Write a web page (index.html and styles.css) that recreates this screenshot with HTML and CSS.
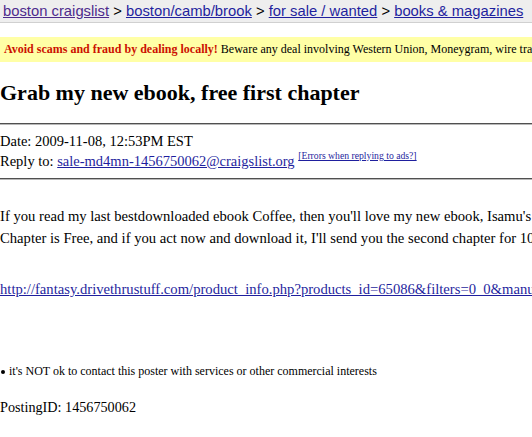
FILE: index.html
```html
<!DOCTYPE html>
<html>
<head>
<meta charset="utf-8">
<link rel="stylesheet" href="styles.css">
</head>
<body>
<div class="bchead">
  <a class="visited" href="#">boston craigslist</a> &gt; <a href="#">boston/camb/brook</a> &gt; <a href="#">for sale / wanted</a> &gt; <a href="#">books &amp; magazines</a>
</div>
<div class="warn"><span class="warn-strong">Avoid scams and fraud by dealing locally!</span> Beware any deal involving Western Union, Moneygram, wire transfer, cashier check, money order, shipping, escrow</div>
<h2 class="title">Grab my new ebook, free first chapter</h2>
<hr class="rule rule-top">
<div class="meta">
  <div>Date: 2009-11-08, 12:53PM EST</div>
  <div>Reply to: <a href="#">sale-md4mn-1456750062@craigslist.org</a> <sup class="err"><a href="#">[Errors when replying to ads?]</a></sup></div>
</div>
<hr class="rule">
<div class="body">
  <p class="text">If you read my last bestdownloaded ebook Coffee, then you'll love my new ebook, Isamu's Journey. The First Chapter is Free, and if you act now and download it, I'll send you the second chapter for 10 cents.</p>
  <p class="link"><a href="#">http://fantasy.drivethrustuff.com/product_info.php?products_id=65086&amp;filters=0_0&amp;manufacturers_id=0</a></p>
</div>
<ul class="notes">
  <li>it's NOT ok to contact this poster with services or other commercial interests</li>
</ul>
<div class="posting">PostingID: 1456750062</div>
</body>
</html>
```

FILE: styles.css
```css
html, body {
  margin: 0;
  padding: 0;
  background: #fff;
  overflow: hidden;
}
body {
  font-family: "Liberation Serif", "Times New Roman", serif;
  font-size: 14.5px;
  color: #000;
  width: 532px;
}
a {
  color: #1f1f9e;
}
a.visited {
  color: #4d2b8c;
}
.bchead {
  font-family: "Liberation Sans", Arial, sans-serif;
  font-size: 14.8px;
  background: #eeeeee;
  border-bottom: 1px solid #d0d0d0;
  padding: 1px 3px 0 3px;
  height: 21px;
  line-height: 21px;
  white-space: nowrap;
  overflow: hidden;
}
.warn {
  margin-top: 14px;
  background: #ffffa6;
  font-size: 12px;
  line-height: 25px;
  height: 25px;
  padding: 0 4px;
  white-space: nowrap;
  overflow: hidden;
}
.warn-strong {
  color: #cc1100;
  font-weight: bold;
}
.title {
  font-size: 22px;
  font-weight: bold;
  margin: 18px 0 0 0;
  line-height: 26px;
  white-space: nowrap;
}
.rule {
  margin: 0;
  border: 0;
  border-top: 1px solid #505050;
  border-bottom: 1px solid #b8b8b8;
  height: 0;
}
.rule-top {
  margin-top: 17px;
}
.meta {
  padding: 6px 0 7px 0;
  line-height: 20px;
  white-space: nowrap;
}
.err {
  font-size: 9.7px;
  line-height: 0;
  vertical-align: 7px;
}
.body {
  padding-top: 25px;
  font-size: 14.65px;
}
.text {
  margin: 0;
  line-height: 22px;
  width: 660px;
}
.link {
  margin: 32px 0 0 0;
  line-height: 17px;
  white-space: nowrap;
}
.notes {
  margin: 66px 0 0 0;
  padding: 0 0 0 9px;
  font-size: 12px;
  line-height: 14px;
  list-style: none;
}
.notes li {
  position: relative;
}
.notes li::before {
  content: "";
  position: absolute;
  left: -8px;
  top: 6px;
  width: 4px;
  height: 4px;
  border-radius: 50%;
  background: #000;
}
.posting {
  margin-top: 21px;
  font-size: 14.2px;
  line-height: 17px;
}
```
